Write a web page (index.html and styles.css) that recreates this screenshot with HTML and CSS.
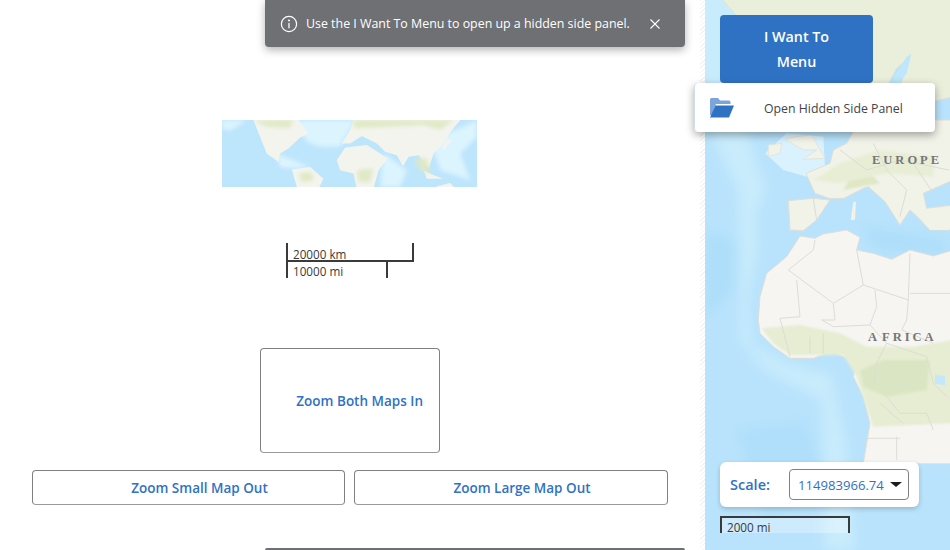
FILE: index.html
```html
<!DOCTYPE html>
<html lang="en">
<head>
  <meta charset="UTF-8" />
  <meta name="viewport" content="width=device-width, initial-scale=1.0"/>
  <title>Side Panel Map</title>
  <link rel="stylesheet" href="styles.css">
</head>
<body>

<div class="page">
  <main class="side">
    <svg class="small-map" viewBox="36 30 764 200" preserveAspectRatio="none">
      <defs>
        <filter id="soft" x="-5%" y="-5%" width="110%" height="110%"><feGaussianBlur stdDeviation="2.2"/></filter>
        <filter id="soft-big" x="-5%" y="-5%" width="110%" height="110%"><feGaussianBlur stdDeviation="7"/></filter>
        <clipPath id="small-clip"><rect x="36" y="30" width="764" height="200"/></clipPath>
      </defs>
      <g clip-path="url(#small-clip)">
        <rect x="36" y="30" width="764" height="200" fill="#bde5fc"/>
        <g filter="url(#soft-big)">
          <path fill="#dbf4fe" d="M36 30H110L60 62 36 56ZM255 30H440L400 90 390 110 330 110 290 95ZM660 90L760 50 800 30V80L750 130 780 210 690 180ZM200 130L300 170 260 175 210 170ZM520 130L590 180 570 230 510 230Z"/>
        </g>
        <g filter="url(#soft)">
          <path fill="#f4f4ef" d="M130 30H265L295 70 270 82 235 115 210 130 205 155 240 168 215 162 170 130 150 80Z"/>
          <path fill="#f4f4ef" d="M245 178L300 170 340 205 325 235H262Z"/>
          <path fill="#f4f4ef" d="M380 150L405 112 470 105 510 130 532 145 505 180 490 235H440L430 190 390 180Z"/>
          <path fill="#f4f4ef" d="M395 100L420 60 430 30H750L725 60 695 105 670 130 655 175 625 135 595 140 578 168 560 135 525 125 500 100 455 78 420 100Z"/>
          <path fill="#f4f4ef" d="M640 180L670 195 700 205 650 205ZM712 85L724 92 700 120 696 110ZM680 228L720 218 735 235H670Z"/>
        </g>
        <g filter="url(#soft-big)">
          <path fill="#dfe9c4" d="M130 30H250L240 55 170 50ZM430 30H730L690 60 640 45 540 50 430 55ZM265 190L305 185 310 210 275 215ZM440 180L490 175 480 215 445 215ZM612 145L650 145 660 190 630 180Z"/>
        </g>
      </g>
    </svg>

    <div class="scalebar">
      <div class="scale-km">20000 km</div>
      <div class="scale-mi">10000 mi</div>
    </div>

    <button class="btn btn-both">Zoom Both Maps In</button>

    <div class="btn-row">
      <button class="btn btn-wide">Zoom Small Map Out</button>
      <button class="btn btn-wide">Zoom Large Map Out</button>
    </div>
  </main>

  <div class="splitter"></div>

  <section class="map">
    <svg class="map-bg" viewBox="0 0 245 550" preserveAspectRatio="none">
      <defs>
        <filter id="blur" x="-5%" y="-5%" width="110%" height="110%"><feGaussianBlur stdDeviation="0.8"/></filter>
        <filter id="blur-mid" x="-5%" y="-5%" width="110%" height="110%"><feGaussianBlur stdDeviation="3"/></filter>
        <filter id="blur-big" x="-5%" y="-5%" width="110%" height="110%"><feGaussianBlur stdDeviation="6"/></filter>
      </defs>
      <rect width="245" height="550" fill="#b9e3fc"/>
      <g filter="url(#blur-big)">
        <path fill="#c9ecfc" d="M-20 -20H120L90 60 40 130 60 190 50 215 52 250 42 300 46 345 85 365 125 375 140 440 150 550H120L118 400 60 370 36 340 36 260 34 190 5 130Z"/>
        <path fill="#aedefa" d="M0 230L30 240 28 290 0 320ZM155 225L240 240 245 255 170 250Z"/>
        <path fill="#b0dffb" d="M30 430L100 420 130 500 60 520Z"/>
      </g>
      <g transform="translate(-15 0) scale(.3333)" filter="url(#blur)">
        <!-- scandinavia, baltic -->
        <path fill="#e9efdb" stroke="#dfe3d2" stroke-width="3" d="M90 -10H790V290L660 320 590 300 600 270 630 260 660 170 620 205 590 260 540 300 480 270 400 180 270 130 150 60Z"/>
        <path fill="#bfe6fc" d="M612 230L650 170 664 162 650 220 622 258Z"/>
      </g>
      <g transform="translate(-5 130) scale(.3333)" filter="url(#blur)">
        <path fill="#d9f2fd" d="M195 70L260 10 370 20 375 110 320 140 250 120Z"/>
        <!-- africa -->
        <path fill="#f6f5f2" stroke="#dfded6" stroke-width="3" d="M300 318L345 325 370 312 440 300 480 322 470 360 520 370 575 388 630 360 700 378 760 360V1000H490L510 880 490 800 460 740 470 700 430 680 395 665 340 685 270 685 220 650 180 610 175 570 180 500 200 430 260 380Z"/>
        <path fill="#f6f5f2" d="M500 1000L520 930 600 920 700 900 760 920V1000Z"/>
        <!-- europe -->
        <path fill="#f1f2e8" stroke="#dfded6" stroke-width="3" d="M265 212L340 205 390 210 350 270 310 302 270 300ZM390 206L345 190 318 130 390 100 400 60 440 40 480 -30H760V150L670 190 680 235 760 225V300L690 300 650 258 630 240 600 285 555 215 505 170 490 175 432 205Z"/>
        <path fill="#f1f2e8" stroke="#dfded6" stroke-width="2" d="M255 28L290 20 335 15 375 85 310 88 350 60 310 60ZM205 45L245 40 240 70 205 80Z"/>
        <path fill="#f1f2e8" d="M460 215L468 215 465 270 452 270ZM655 255L700 250 747 240V300L690 300Z"/>
      </g>
      <g transform="translate(-5 130) scale(.3333)" filter="url(#blur-mid)">
        <path fill="#e6edd2" d="M185 595L300 585 420 610 500 650 640 650 760 630V880L520 890 470 740 430 675 340 675 270 675 220 640Z"/>
        <path fill="#dae6c3" d="M480 720L550 690 690 690 680 780 560 800 490 770Z"/>
        <path fill="#dfe7c5" d="M430 180L450 145 520 140 540 160 480 170Z"/>
        <path fill="#e8eed6" d="M340 150L420 100 540 60 700 80 700 140 560 130 420 160Z"/>
      </g>
      <g transform="translate(-5 130) scale(.3333)" filter="url(#blur)">
        <path fill="#c4e8fb" d="M705 735L735 738 735 765 705 762Z"/>
        <path fill="none" stroke="#dddcd4" stroke-width="3" d="M345 330L340 360 265 420 400 520 490 465 625 510 630 370M470 360L490 465M290 450L300 560 240 565M400 520L405 570 365 570 400 590M525 480L530 530 510 585M625 510L620 570 605 600M630 490H760M400 590L510 585 560 640 680 680M240 565L270 680M330 620V670M370 610V670M605 600L700 640M560 640L530 700 520 760M680 680L700 760 740 800M560 800L600 850 680 850 700 900M590 920V990M500 925H600M420 60L500 120 600 90 747 120M520 40L560 120 620 180 600 260M640 100L700 190M340 205L350 270M540 820L610 880"/>
      </g>
      <text class="map-label" x="167" y="164">EUROPE</text>
      <text class="map-label" x="163" y="341">A<tspan dx="2">FRICA</tspan></text>
    </svg>

    <button class="want-btn">I Want To<br>Menu</button>

    <div class="scale-box">
      <span class="scale-label">Scale:</span>
      <div class="scale-select">114983966.74<span class="caret"></span></div>
    </div>

    <div class="map-scalebar">2000 mi</div>
  </section>
</div>

<div class="toast">
  <svg class="toast-icon" viewBox="0 0 18 18" width="18" height="18">
    <circle cx="9" cy="9" r="7.6" fill="none" stroke="#fff" stroke-width="1.2"/>
    <circle cx="9" cy="5.5" r="1" fill="#fff"/>
    <path d="M9 8v5.2" stroke="#fff" stroke-width="1.3" fill="none"/>
  </svg>
  <span class="toast-text">Use the I Want To Menu to open up a hidden side panel.</span>
  <svg class="toast-close" viewBox="0 0 12 12" width="12" height="12">
    <path d="M1.5 1.5l9 9M10.5 1.5l-9 9" stroke="#fff" stroke-width="1.1" fill="none"/>
  </svg>
</div>

<div class="menu">
  <svg class="menu-icon" viewBox="0 0 24 21" width="24" height="21">
    <path fill="#79a6dc" d="M0 2.5Q0 1 1.5 1H8l2 2.5h9Q20.500 3.500 20.500 5V7H6L2 18H0Z"/>
    <path fill="#2f72c4" d="M5.500 8.500H24L19 20.500H0Z"/>
  </svg>
  <span class="menu-text">Open Hidden Side Panel</span>
</div>

<div class="toast-edge"></div>

</body>
</html>
```

FILE: styles.css
```css
body {
  font-family: "Open Sans", Arial, sans-serif;
  background: white;
  margin: 0;
  padding: 0;
  width: 950px;
  height: 550px;
  overflow: hidden;
}
.page {
  display: flex;
  height: 550px;
}
.side {
  width: 700px;
  display: flex;
  flex-direction: column;
  align-items: center;
  padding-top: 120px;
  box-sizing: border-box;
}
.small-map {
  display: block;
  width: 255px;
  height: 67px;
  margin-right: 1px;
}
.scalebar {
  width: 128px;
  margin-top: 56px;
  font-size: 11.7px;
  line-height: 16px;
  color: #3a3a3a;
}
.scale-km {
  height: 14px;
  padding: 3px 0 0 5px;
  border: 2px solid #3a3a3a;
  border-top: none;
}
.scale-mi {
  width: 93px;
  height: 15px;
  padding: 1px 0 0 5px;
  border-left: 2px solid #3a3a3a;
  border-right: 2px solid #3a3a3a;
}
.btn {
  height: 35px;
  background: white;
  color: #2f72c4;
  border: 1px solid #807f85;
  border-bottom-color: #9a9a9a;
  border-radius: 4px;
  font-family: inherit;
  font-size: 13.5px;
  font-weight: 600;
  cursor: pointer;
}
.btn-both {
  width: 180px;
  height: 105px;
  margin-top: 70px;
  padding: 0 16px 0 0;
  text-align: right;
}
.btn-row {
  display: grid;
  grid-template-columns: 313px 314px;
  gap: 9px;
  width: 636px;
  margin-top: 17px;
}
.btn-wide {
  padding: 0 0 0 22px;
}
.splitter {
  width: 5px;
  background: repeating-linear-gradient(135deg, #f3f3f3 0 1px, #fff 1px 3px);
}
.map {
  position: relative;
  width: 245px;
  height: 550px;
  overflow: hidden;
}
.map-bg {
  display: block;
  width: 245px;
  height: 550px;
}
.map-label {
  font-family: "Liberation Serif", serif;
  font-size: 12.5px;
  font-weight: 700;
  letter-spacing: 3px;
  fill: #767676;
}
.want-btn {
  position: absolute;
  left: 15px;
  top: 15px;
  width: 153px;
  height: 68px;
  background: #2f72c4;
  color: white;
  border: none;
  border-radius: 4px;
  font-family: inherit;
  font-size: 14.3px;
  font-weight: 600;
  line-height: 25px;
  cursor: pointer;
}
.scale-box {
  position: absolute;
  left: 15px;
  top: 462px;
  width: 199px;
  height: 45px;
  display: flex;
  align-items: center;
  gap: 18px;
  padding-left: 10px;
  box-sizing: border-box;
  background: white;
  border-radius: 6px;
  box-shadow: 0 2px 5px rgba(0, 0, 0, 0.2);
}
.scale-label {
  width: 41px;
  color: #2f72c4;
  font-size: 14.5px;
  font-weight: 600;
}
.scale-select {
  display: flex;
  align-items: center;
  justify-content: space-between;
  width: 120px;
  height: 31px;
  padding: 0 6px 0 8px;
  box-sizing: border-box;
  border: 1px solid #807f85;
  border-radius: 4px;
  color: #2f72c4;
  font-size: 13.1px;
}
.caret {
  width: 0;
  height: 0;
  border-left: 6px solid transparent;
  border-right: 6px solid transparent;
  border-top: 5px solid #1c1c1c;
}
.map-scalebar {
  position: absolute;
  left: 15px;
  top: 516px;
  width: 130px;
  height: 17px;
  padding-left: 5px;
  box-sizing: border-box;
  border: 2px solid #3a3a3a;
  border-bottom: none;
  background: rgba(255, 255, 255, 0.3);
  color: #3a3a3a;
  font-size: 11.7px;
  line-height: 19px;
}
.toast {
  position: absolute;
  left: 265px;
  top: 0;
  width: 420px;
  height: 47px;
  display: flex;
  align-items: center;
  padding-left: 15px;
  box-sizing: border-box;
  background: #6f7074;
  color: white;
  border-radius: 0 0 4px 4px;
  box-shadow: 0 3px 8px rgba(0, 0, 0, 0.3);
}
.toast-text {
  margin-left: 8px;
  font-size: 12.4px;
}
.toast-close {
  margin-left: 19px;
}
.menu {
  position: absolute;
  left: 694px;
  top: 83px;
  width: 241px;
  height: 49px;
  display: flex;
  align-items: center;
  gap: 30px;
  padding-left: 16px;
  box-sizing: border-box;
  background: white;
  color: #444;
  border-radius: 4px;
  font-size: 12.3px;
  box-shadow: inset 1px 0 0 #cfe0f3, 0 3px 8px rgba(0, 0, 0, 0.35);
}
.menu-text {
  padding-top: 2px;
}
.toast-edge {
  position: absolute;
  left: 265px;
  top: 548px;
  width: 420px;
  height: 2px;
  background: #6f7074;
  border-radius: 4px 4px 0 0;
}
```
